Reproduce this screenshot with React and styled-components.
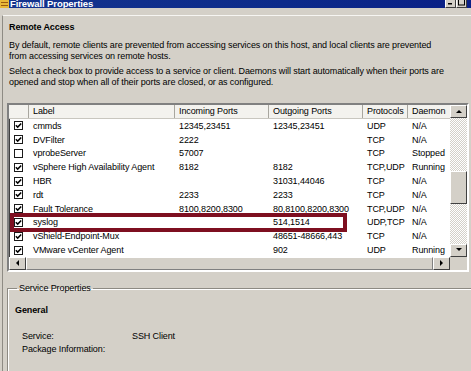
import React from 'react'
import styled, { createGlobalStyle } from 'styled-components'

const GlobalStyle = createGlobalStyle`
    html, body {
        margin: 0;
        padding: 0;
        background: #d4d0c8;
    }
    body {
        font-family: "Liberation Sans", Arial, sans-serif;
        font-size: 9px;
        letter-spacing: -0.1px;
        color: #000;
    }
`

const services = [
    { label: 'cmmds', inc: '12345,23451', out: '12345,23451', proto: 'UDP', daemon: 'N/A', on: true },
    { label: 'DVFilter', inc: '2222', out: '', proto: 'TCP', daemon: 'N/A', on: true },
    { label: 'vprobeServer', inc: '57007', out: '', proto: 'TCP', daemon: 'Stopped', on: false },
    { label: 'vSphere High Availability Agent', inc: '8182', out: '8182', proto: 'TCP,UDP', daemon: 'Running', on: true },
    { label: 'HBR', inc: '', out: '31031,44046', proto: 'TCP', daemon: 'N/A', on: true },
    { label: 'rdt', inc: '2233', out: '2233', proto: 'TCP', daemon: 'N/A', on: true },
    { label: 'Fault Tolerance', inc: '8100,8200,8300', out: '80,8100,8200,8300', proto: 'TCP,UDP', daemon: 'N/A', on: true },
    { label: 'syslog', inc: '', out: '514,1514', proto: 'UDP,TCP', daemon: 'N/A', on: true },
    { label: 'vShield-Endpoint-Mux', inc: '', out: '48651-48666,443', proto: 'TCP', daemon: 'N/A', on: true },
    { label: 'VMware vCenter Agent', inc: '', out: '902', proto: 'UDP', daemon: 'Running', on: true },
]

const App = () => {
    return (
        <>
            <GlobalStyle />
            <Window>
                <TitleBar>
                    <TitleIcon viewBox="0 0 9 9">
                        <rect x="0" y="0" width="9" height="9" fill="#e8b838" />
                        <rect x="1" y="2" width="7" height="1" fill="#9a5a10" />
                        <rect x="1" y="5" width="7" height="1" fill="#9a5a10" />
                    </TitleIcon>
                    <TitleText>Firewall Properties</TitleText>
                    <TitleButtons>
                        <WinButton>
                            <svg width="9" height="8" viewBox="0 0 9 8"><rect x="2" y="4" width="4" height="1.5" fill="#000" /></svg>
                        </WinButton>
                        <WinButton>
                            <svg width="9" height="8" viewBox="0 0 9 8"><rect x="1.5" y="0" width="6" height="6" fill="none" stroke="#000" strokeWidth="1" /></svg>
                        </WinButton>
                    </TitleButtons>
                </TitleBar>
                <Page>
                    <Heading>Remote Access</Heading>
                    <Para>By default, remote clients are prevented from accessing services on this host, and local clients are prevented from accessing services on remote hosts.</Para>
                    <Para>Select a check box to provide access to a service or client. Daemons will start automatically when their ports are opened and stop when all of their ports are closed, or as configured.</Para>
                    <ListView>
                        <ListMain>
                            <HeaderRow>
                                <HeadCell />
                                <HeadCell>Label</HeadCell>
                                <HeadCell>Incoming Ports</HeadCell>
                                <HeadCell>Outgoing Ports</HeadCell>
                                <HeadCell>Protocols</HeadCell>
                                <HeadCell>Daemon</HeadCell>
                            </HeaderRow>
                            {services.map(s => (
                                <Row key={s.label}>
                                    <CheckCell><CheckBox checked={s.on} /></CheckCell>
                                    <Cell>{s.label}</Cell>
                                    <Cell>{s.inc}</Cell>
                                    <Cell>{s.out}</Cell>
                                    <Cell>{s.proto}</Cell>
                                    <Cell>{s.daemon}</Cell>
                                </Row>
                            ))}
                        </ListMain>
                        <VScroll>
                            <ScrollBtn><Arrow dir="up" /></ScrollBtn>
                            <Track>
                                <Thumb />
                            </Track>
                            <ScrollBtn><Arrow dir="down" /></ScrollBtn>
                        </VScroll>
                        <HScroll>
                            <ScrollBtn><Arrow dir="left" /></ScrollBtn>
                            <HTrack />
                            <ScrollBtn><Arrow dir="right" /></ScrollBtn>
                        </HScroll>
                        <Corner />
                        <Highlight />
                    </ListView>
                    <GroupBox>
                        <Legend>Service Properties</Legend>
                        <GroupTitle>General</GroupTitle>
                        <PropGrid>
                            <span>Service:</span>
                            <span>SSH Client</span>
                            <span>Package Information:</span>
                            <span></span>
                        </PropGrid>
                    </GroupBox>
                </Page>
            </Window>
        </>
    )
}

const CheckBox = ({ checked }) => (
    <Box>
        {checked && (
            <svg width="7" height="7" viewBox="0 0 7 7">
                <path d="M0.8 3.2 L2.7 5.1 L6.2 1.4" fill="none" stroke="#000" strokeWidth="1.5" />
            </svg>
        )}
    </Box>
)

const Arrow = ({ dir }) => {
    const pts = {
        up: '1,5 4,2 7,5',
        down: '1,2 4,5 7,2',
        left: '5,1 2,4 5,7',
        right: '2,1 5,4 2,7',
    }[dir]
    return (
        <svg width="8" height="8" viewBox="0 0 8 8">
            <polygon points={pts} fill="#000" />
        </svg>
    )
}

const Window = styled.div`
    width: 471px;
    height: 371px;
    overflow: hidden;
    display: flex;
    flex-direction: column;
`

const TitleBar = styled.div`
    height: 8px;
    flex: none;
    display: flex;
    align-items: flex-end;
    background: linear-gradient(90deg, #14348e 0%, #0c2a8a 60%, #0a1f86 100%);
    overflow: hidden;
    padding-right: 4px;
`

const TitleIcon = styled.svg`
    width: 9px;
    height: 9px;
    flex: none;
    margin-bottom: -1px;
`

const TitleText = styled.div`
    color: #fff;
    font-weight: bold;
    font-size: 9.5px;
    line-height: 10px;
    margin-left: 1px;
    margin-bottom: -1px;
    flex: 1;
`

const TitleButtons = styled.div`
    display: flex;
    align-self: stretch;
`

const WinButton = styled.div`
    width: 9px;
    height: 7px;
    background: #d4d0c8;
    border-right: 1px solid #404040;
    border-bottom: 1px solid #404040;
    border-left: 1px solid #fff;
    display: flex;
    align-items: flex-end;
    justify-content: center;
    overflow: hidden;
`

const Page = styled.div`
    flex: 1;
    margin-top: 7px;
    border-top: 1px solid #f6f5f2;
    border-left: 1px solid #8e8b84;
    margin-left: 2px;
    padding: 6px 0 0 6px;
`

const Heading = styled.div`
    font-weight: bold;
    line-height: 11px;
`

const Para = styled.p`
    margin: 7px 0 0;
    line-height: 11px;
    width: 440px;
    & + & {
        margin-top: 4px;
    }
`

const ListView = styled.div`
    position: relative;
    margin: 15px 0 0 -2px;
    width: 458px;
    border: 2px solid;
    border-color: #808080 #fff #fff #808080;
    box-shadow: inset 1px 1px 0 #404040;
    background: #fff;
    display: grid;
    grid-template-columns: 1fr 17px;
    grid-template-rows: auto 13px;
`

const ListMain = styled.div`
    display: flex;
    flex-direction: column;
    overflow: hidden;
`

const columns = '20px 146px 94px 94px 45px 42px'

const HeaderRow = styled.div`
    display: grid;
    grid-template-columns: ${columns};
    height: 13px;
    background: #f3f2ee;
    border-bottom: 1px solid #c8c6bf;
`

const HeadCell = styled.div`
    padding-left: 4px;
    line-height: 13px;
    border-right: 1px solid #a8a69f;
    white-space: nowrap;
    overflow: hidden;
    &:last-child {
        border-right: none;
    }
`

const Row = styled.div`
    display: grid;
    grid-template-columns: ${columns};
    height: 13.8px;
    align-items: center;
`

const Cell = styled.div`
    padding-left: 4px;
    white-space: nowrap;
    overflow: hidden;
`

const CheckCell = styled.div`
    display: flex;
    justify-content: flex-end;
    padding-right: 6px;
`

const Box = styled.div`
    width: 7px;
    height: 7px;
    border: 1.5px solid #1a1a1a;
    background: #fff;
    display: flex;
    align-items: center;
    justify-content: center;
`

const VScroll = styled.div`
    display: flex;
    flex-direction: column;
    background: #e6e4df;
`

const ScrollBtn = styled.div`
    width: 17px;
    height: 13px;
    flex: none;
    box-sizing: border-box;
    background: #d4d0c8;
    border: 1px solid;
    border-color: #fff #404040 #404040 #fff;
    display: flex;
    align-items: center;
    justify-content: center;
`

const Track = styled.div`
    flex: 1;
    background-color: #ecebe8;
    background-image: repeating-conic-gradient(#d4d0c8 0 25%, #fff 0 50%);
    background-size: 2px 2px;
    padding-top: 53px;
`

const Thumb = styled.div`
    height: 33px;
    box-sizing: border-box;
    background: #d4d0c8;
    border: 1px solid;
    border-color: #fff #404040 #404040 #fff;
`

const HScroll = styled.div`
    display: flex;
    background: #d4d0c8;
`

const HTrack = styled.div`
    flex: 1;
    background: #d4d0c8;
    border-top: 1px solid #fff;
    border-bottom: 1px solid #808080;
    border-left: 1px solid #fff;
    border-right: 1px solid #808080;
`

const Corner = styled.div`
    background: #d4d0c8;
`

const Highlight = styled.div`
    position: absolute;
    left: 1px;
    top: 108px;
    width: 337px;
    height: 19px;
    box-sizing: border-box;
    border: 4px solid #7e0f20;
    pointer-events: none;
`

const GroupBox = styled.fieldset`
    margin: 11px 0 0 -2px;
    width: 459px;
    padding: 11px 0 40px 7px;
    border: 1px solid #8d8a83;
    box-shadow: 1px 1px 0 #fff inset;
    border-radius: 0;
`

const Legend = styled.legend`
    padding: 0 2px;
    margin-left: 2px;
    line-height: 11px;
`

const GroupTitle = styled.div`
    font-weight: bold;
    line-height: 11px;
`

const PropGrid = styled.div`
    display: grid;
    grid-template-columns: 110px 1fr;
    row-gap: 2px;
    margin: 15px 0 0 7px;
    line-height: 11px;
`

export default App
